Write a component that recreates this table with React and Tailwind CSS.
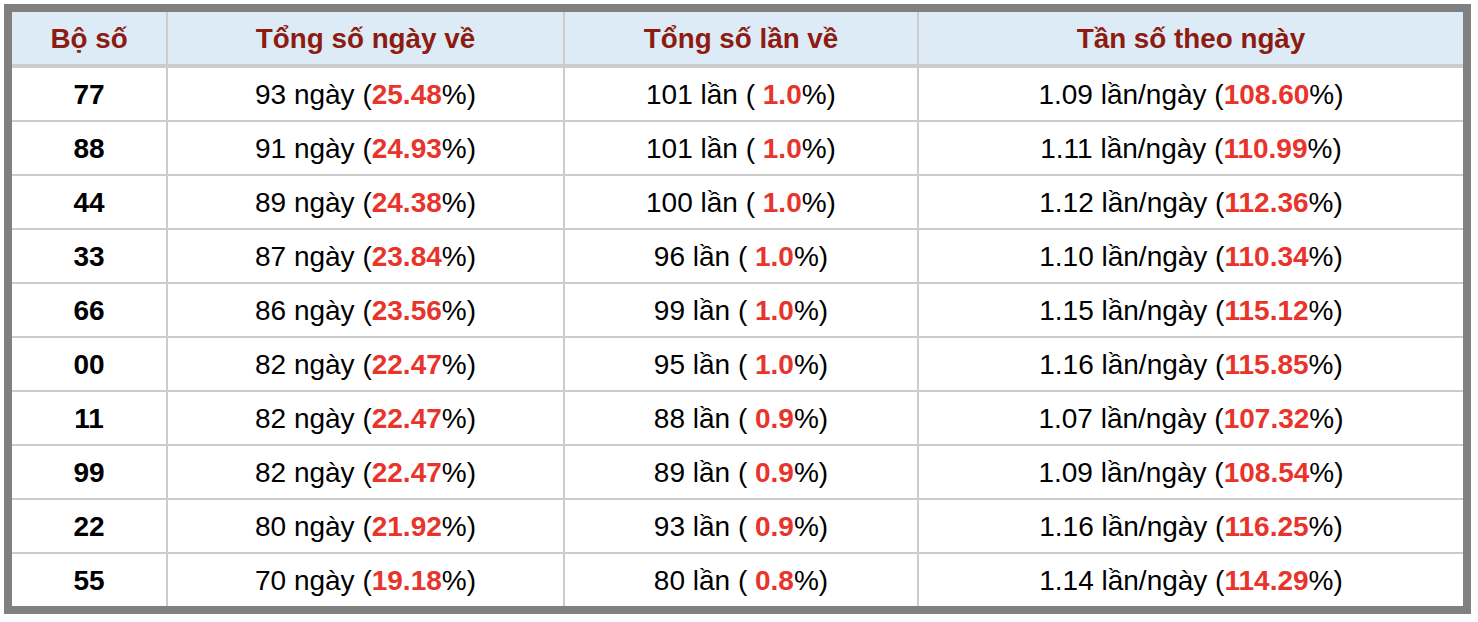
import React from "react";

const rows = [
  ["77", "93", "25.48", "101", "1.0", "1.09", "108.60"],
  ["88", "91", "24.93", "101", "1.0", "1.11", "110.99"],
  ["44", "89", "24.38", "100", "1.0", "1.12", "112.36"],
  ["33", "87", "23.84", "96", "1.0", "1.10", "110.34"],
  ["66", "86", "23.56", "99", "1.0", "1.15", "115.12"],
  ["00", "82", "22.47", "95", "1.0", "1.16", "115.85"],
  ["11", "82", "22.47", "88", "0.9", "1.07", "107.32"],
  ["99", "82", "22.47", "89", "0.9", "1.09", "108.54"],
  ["22", "80", "21.92", "93", "0.9", "1.16", "116.25"],
  ["55", "70", "19.18", "80", "0.8", "1.14", "114.29"],
];

const cols = "grid grid-cols-[154px_395px_352px_544px] gap-x-[2px]";

export default function App() {
  return (
    <div
      className="bg-white w-[1478px] h-[622px] pt-[4px] pl-[4px]"
      style={{ fontFamily: '"Liberation Sans", Arial, sans-serif' }}
    >
      <div className="w-[1467px] h-[610px] border-[8px] border-[#808080] bg-[#cccccc] flex flex-col text-[28px] text-black">
        <div className={`${cols} h-[52px] mb-[4px] font-bold text-[27.8px] text-[#8e1b12]`}>
          <div className="bg-[#dcebf5] flex items-center justify-center pt-[1px]">Bộ số</div>
          <div className="bg-[#dcebf5] flex items-center justify-center pt-[1px]">Tổng số ngày về</div>
          <div className="bg-[#dcebf5] flex items-center justify-center pt-[1px]">Tổng số lần về</div>
          <div className="bg-[#dcebf5] flex items-center justify-center pt-[1px]">Tần số theo ngày</div>
        </div>
        <div className="flex flex-col gap-y-[2px]">
          {rows.map((r) => (
            <div key={r[0]} className={`${cols} h-[52px]`}>
              <div className="bg-white flex items-center justify-center pt-[1px] font-bold">{r[0]}</div>
              <div className="bg-white flex items-center justify-center pt-[1px] whitespace-pre">
                {r[1]} ngày (<span className="font-bold text-[#e8342a]">{r[2]}</span>%)
              </div>
              <div className="bg-white flex items-center justify-center pt-[1px] whitespace-pre">
                {r[3]} lần ( <span className="font-bold text-[#e8342a]">{r[4]}</span>%)
              </div>
              <div className="bg-white flex items-center justify-center pt-[1px] whitespace-pre">
                {r[5]} lần/ngày (<span className="font-bold text-[#e8342a]">{r[6]}</span>%)
              </div>
            </div>
          ))}
        </div>
      </div>
    </div>
  );
}
